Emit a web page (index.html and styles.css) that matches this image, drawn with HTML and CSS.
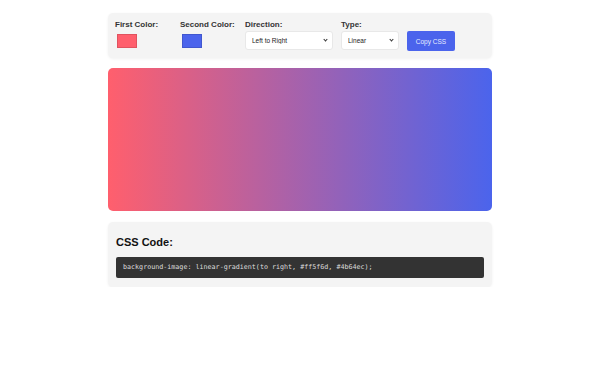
FILE: index.html
```html
<!DOCTYPE html>
<html>
<head>
    <title>Gradient Generator</title>
    <link rel="stylesheet" href="styles.css">
</head>
<body>
    <div class="container">
        <div class="controls">
            <div class="control color-control">
                <label>First Color:</label>
                <div class="swatch" style="background-color: #ff5f6d;"></div>
            </div>
            <div class="control color-control">
                <label>Second Color:</label>
                <div class="swatch" style="background-color: #4b64ec;"></div>
            </div>
            <div class="control">
                <label>Direction:</label>
                <div class="select-wrap">
                    <select class="direction">
                        <option>Left to Right</option>
                    </select>
                </div>
            </div>
            <div class="control">
                <label>Type:</label>
                <div class="select-wrap">
                    <select class="type">
                        <option>Linear</option>
                    </select>
                </div>
            </div>
            <button class="copy-button">Copy CSS</button>
        </div>

        <div class="preview"></div>

        <div class="code-panel">
            <h3>CSS Code:</h3>
            <pre class="code">background-image: linear-gradient(to right, #ff5f6d, #4b64ec);</pre>
        </div>
    </div>
</body>
</html>
```

FILE: styles.css
```css
body {
    font-family: "Liberation Sans", Arial, sans-serif;
    margin: 0;
    padding: 0;
    background-color: #fff;
}
.container {
    width: 384px;
    margin: 13px auto 0;
    display: flex;
    flex-direction: column;
}
.controls {
    background-color: #f4f4f4;
    border-radius: 5px;
    padding: 7px 8px 8px 7px;
    display: flex;
    align-items: flex-start;
    gap: 8px;
    box-shadow: 0 1px 3px rgba(0, 0, 0, 0.06);
}
.control {
    display: flex;
    flex-direction: column;
    gap: 2px;
}
.color-control {
    width: 57px;
    gap: 5px;
}
.control label {
    font-size: 8px;
    line-height: 9px;
    font-weight: bold;
    color: #333;
}
.swatch {
    width: 20px;
    height: 14px;
    margin-left: 2px;
    box-sizing: border-box;
    border: 1px solid rgba(0, 0, 0, 0.12);
}
.select-wrap {
    position: relative;
}
.select-wrap::after {
    content: "";
    position: absolute;
    right: 6px;
    top: 7px;
    width: 2px;
    height: 2px;
    border-right: 1px solid #333;
    border-bottom: 1px solid #333;
    transform: rotate(45deg);
}
select {
    appearance: none;
    font-family: "Liberation Sans", Arial, sans-serif;
    font-size: 6.5px;
    color: #222;
    height: 19px;
    background-color: #fff;
    border: 1px solid #e8e8e8;
    border-radius: 3px;
    padding: 0 6px;
    display: block;
}
.direction {
    width: 88px;
}
.type {
    width: 58px;
}
.copy-button {
    align-self: flex-end;
    background-color: #4b64ec;
    color: #e8ecff;
    border: none;
    border-radius: 2px;
    font-family: "Liberation Sans", Arial, sans-serif;
    font-size: 6.5px;
    width: 48px;
    height: 20px;
    margin-bottom: -1px;
}
.preview {
    height: 143px;
    margin: 10px 0 11px;
    border-radius: 5px;
    background-image: linear-gradient(to right, #ff5f6d, #4b64ec);
}
.code-panel {
    background-color: #f4f4f4;
    border-radius: 5px;
    padding: 14px 8px 9px;
    box-shadow: 0 1px 3px rgba(0, 0, 0, 0.06);
}
.code-panel h3 {
    font-size: 11px;
    line-height: 13px;
    margin: 0 0 8px;
    color: #111;
}
.code {
    background-color: #333;
    color: #dcdcdc;
    font-family: "DejaVu Sans Mono", monospace;
    font-size: 6.7px;
    line-height: 7px;
    margin: 0;
    padding: 7px 7px;
    border-radius: 2px;
}
```
